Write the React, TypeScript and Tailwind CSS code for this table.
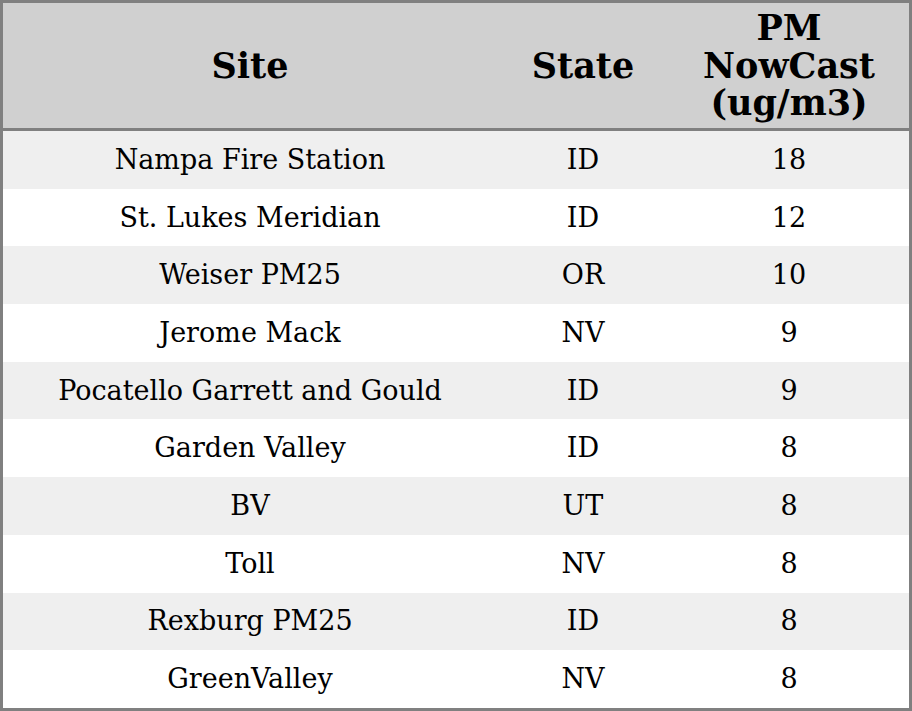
const rows = [
  { site: 'Nampa Fire Station', state: 'ID', pm: 18 },
  { site: 'St. Lukes Meridian', state: 'ID', pm: 12 },
  { site: 'Weiser PM25', state: 'OR', pm: 10 },
  { site: 'Jerome Mack', state: 'NV', pm: 9 },
  { site: 'Pocatello Garrett and Gould', state: 'ID', pm: 9 },
  { site: 'Garden Valley', state: 'ID', pm: 8 },
  { site: 'BV', state: 'UT', pm: 8 },
  { site: 'Toll', state: 'NV', pm: 8 },
  { site: 'Rexburg PM25', state: 'ID', pm: 8 },
  { site: 'GreenValley', state: 'NV', pm: 8 },
];

export default function App() {
  return (
    <div className="w-[912px] h-[711px] bg-white border-[3px] border-[#808080] font-['DejaVu_Serif',serif] text-black">
      <table className="w-full h-full border-separate border-spacing-0 table-fixed">
        <colgroup>
          <col className="w-[494px]" />
          <col className="w-[172px]" />
          <col className="w-[240px]" />
        </colgroup>
        <thead>
          <tr className="h-[128px] bg-[#d0d0d0] text-[35px] leading-[37.5px] font-bold">
            <th className="border-b-[3px] border-[#808080] font-bold">Site</th>
            <th className="border-b-[3px] border-[#808080] font-bold">State</th>
            <th className="border-b-[3px] border-[#808080] font-bold">
              PM
              <br />
              NowCast
              <br />
              (ug/m3)
            </th>
          </tr>
        </thead>
        <tbody>
          {rows.map((row, i) => (
            <tr key={row.site} className={`text-[27px] leading-[36px] text-center ${i % 2 === 0 ? 'bg-[#efefef]' : 'bg-white'}`}>
              <td>{row.site}</td>
              <td>{row.state}</td>
              <td>{row.pm}</td>
            </tr>
          ))}
        </tbody>
      </table>
    </div>
  );
}
